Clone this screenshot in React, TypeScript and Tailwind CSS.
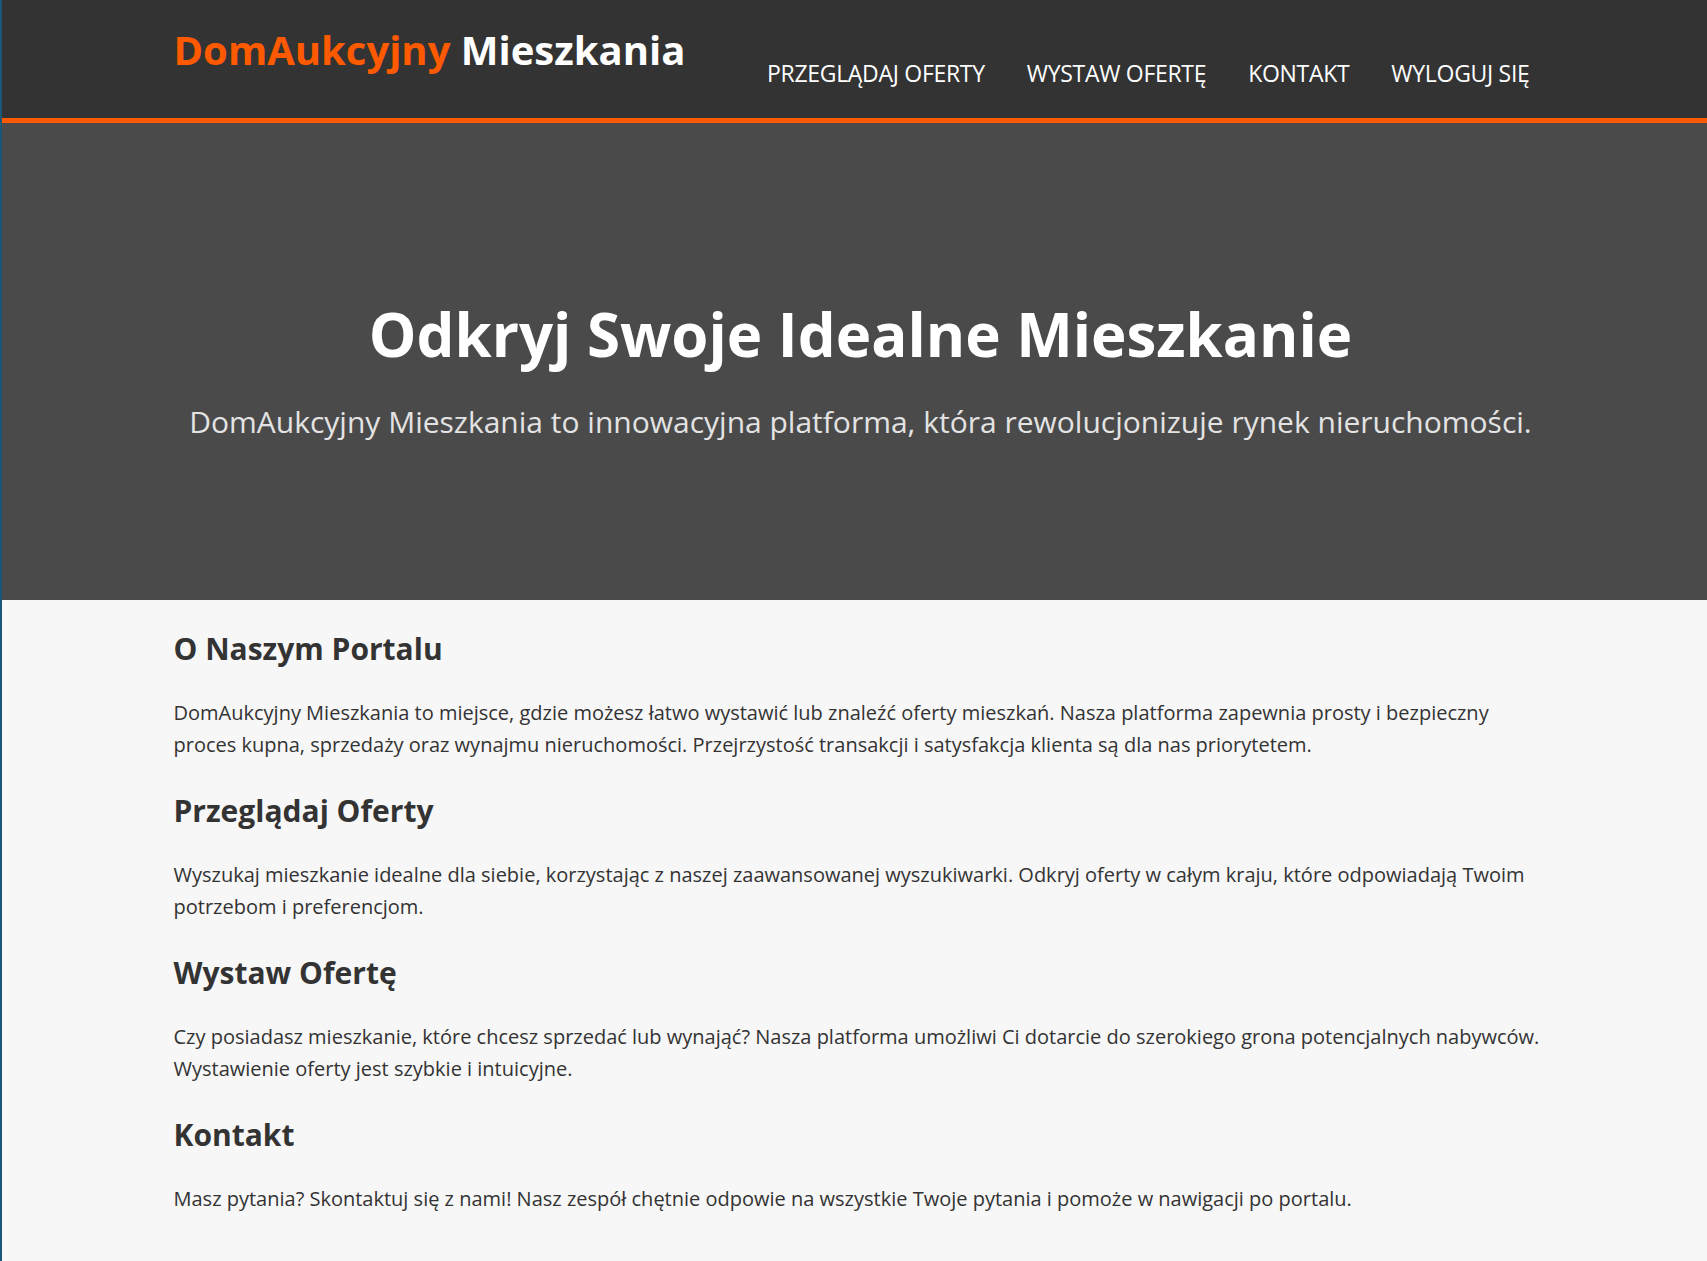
import React from "react";

const sections = [
  {
    title: "O Naszym Portalu",
    text: "DomAukcyjny Mieszkania to miejsce, gdzie możesz łatwo wystawić lub znaleźć oferty mieszkań. Nasza platforma zapewnia prosty i bezpieczny proces kupna, sprzedaży oraz wynajmu nieruchomości. Przejrzystość transakcji i satysfakcja klienta są dla nas priorytetem.",
  },
  {
    title: "Przeglądaj Oferty",
    text: "Wyszukaj mieszkanie idealne dla siebie, korzystając z naszej zaawansowanej wyszukiwarki. Odkryj oferty w całym kraju, które odpowiadają Twoim potrzebom i preferencjom.",
  },
  {
    title: "Wystaw Ofertę",
    text: "Czy posiadasz mieszkanie, które chcesz sprzedać lub wynająć? Nasza platforma umożliwi Ci dotarcie do szerokiego grona potencjalnych nabywców. Wystawienie oferty jest szybkie i intuicyjne.",
  },
  {
    title: "Kontakt",
    text: "Masz pytania? Skontaktuj się z nami! Nasz zespół chętnie odpowie na wszystkie Twoje pytania i pomoże w nawigacji po portalu.",
  },
];

const navLinks = ["Przeglądaj Oferty", "Wystaw Ofertę", "Kontakt", "Wyloguj się"];

export default function App() {
  return (
    <div
      className="min-h-screen bg-[#f7f7f7] border-l-2 border-[#1b5677] text-[#333]"
      style={{ fontFamily: '"Open Sans", "Noto Sans", sans-serif' }}
    >
      {/* Header */}
      <header className="bg-[#333333] border-b-[5px] border-[#ff5a00]">
        <div className="max-w-[1400px] mx-auto pl-[19px] pr-5 h-[118px] flex justify-between items-start">
          <h1 className="pt-[24px] text-[40px] font-bold leading-[52px]">
            <span className="text-[#ff5a00]">DomAukcyjny</span>{" "}
            <span className="text-white">Mieszkania</span>
          </h1>
          <nav className="pt-[58px] flex gap-[42px] pr-[5px]">
            {navLinks.map((link) => (
              <a
                key={link}
                href="#"
                className="text-white uppercase text-[23px] leading-[30px] tracking-[-0.3px]"
              >
                {link}
              </a>
            ))}
          </nav>
        </div>
      </header>

      {/* Hero */}
      <section className="bg-[#4a4a4a] h-[477px] flex flex-col items-center justify-center text-center pt-[17px] pl-[12px]">
        <h2 className="text-white text-[60px] font-bold leading-[72px]">
          Odkryj Swoje Idealne Mieszkanie
        </h2>
        <p className="text-[#e3e3e3] text-[30px] leading-[40px] mt-[32px]">
          DomAukcyjny Mieszkania to innowacyjna platforma, która rewolucjonizuje rynek nieruchomości.
        </p>
      </section>

      {/* Content */}
      <main className="max-w-[1400px] mx-auto pl-[19px] pr-[7px] pt-[29px] pb-[40px]">
        {sections.map((section) => (
          <div key={section.title} className="mb-[30px]">
            <h3 className="text-[30px] font-bold leading-[40px] mb-[28px]">{section.title}</h3>
            <p className="text-[20px] leading-[32px]">{section.text}</p>
          </div>
        ))}
      </main>
    </div>
  );
}
